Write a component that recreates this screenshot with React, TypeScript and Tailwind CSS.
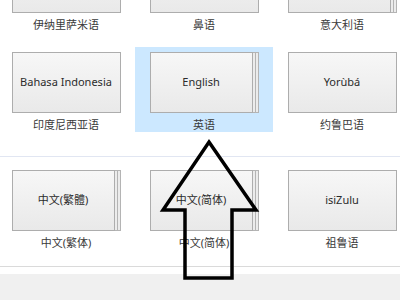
const FONT = { fontFamily: '"Noto Sans", "Noto Sans CJK SC", sans-serif' };

type Lang = { native: string; label: string; stacked?: boolean; selected?: boolean };

// top row is scrolled past; its tile captions are out of view
const rows: Lang[][] = [
  [
    { native: "", label: "伊纳里萨米语" },
    { native: "", label: "鼻语" },
    { native: "", label: "意大利语", stacked: true },
  ],
  [
    { native: "Bahasa Indonesia", label: "印度尼西亚语" },
    { native: "English", label: "英语", stacked: true, selected: true },
    { native: "Yorùbá", label: "约鲁巴语" },
  ],
];

const lastRow: Lang[] = [
  { native: "中文(繁體)", label: "中文(繁体)", stacked: true },
  { native: "中文(简体)", label: "中文(简体)", stacked: true },
  { native: "isiZulu", label: "祖鲁语" },
];

function Tile({ lang }: { lang: Lang }) {
  return (
    <div
      className={
        "flex h-[85px] w-[138px] shrink-0 flex-col items-center pt-[5px] " +
        (lang.selected ? "bg-[#cce8ff]" : "")
      }
    >
      <div className="flex h-[61px] w-[109px]">
        <div className="flex flex-1 items-center justify-center border border-[#adadad] bg-linear-to-b from-[#f7f7f7] to-[#e9e9e9] text-[11px] text-[#2b2b2b]">
          {lang.native}
        </div>
        {lang.stacked && (
          <>
            <div className="w-[3px] border-y border-r border-[#b4b4b4] bg-[#ececec]" />
            <div className="w-[3px] border-y border-r border-[#b4b4b4] bg-[#ececec]" />
          </>
        )}
      </div>
      <div className="mt-[5px] text-[11px] leading-[14px] text-[#3a3a3a]">{lang.label}</div>
    </div>
  );
}

export default function App() {
  return (
    <div className="relative h-[300px] w-[400px] overflow-hidden bg-white" style={FONT}>
      <div className="mt-[-53px] flex flex-col">
        <div className="ml-[-3px] flex">
          {rows[0].map((l) => (
            <Tile key={l.label} lang={l} />
          ))}
        </div>
        <div className="ml-[-3px] mt-[15px] flex">
          {rows[1].map((l) => (
            <Tile key={l.label} lang={l} />
          ))}
        </div>
        <div className="mt-[24px] h-px bg-[#e1e6f2]" />
        <div className="ml-[-3px] mt-[8px] flex">
          {lastRow.map((l) => (
            <Tile key={l.label} lang={l} />
          ))}
        </div>
        <div className="mt-[16px] h-px bg-[#dadada]" />
        <div className="h-[7px] bg-white" />
        <div className="h-[40px] bg-[#f0f0f0]" />
      </div>
      <svg className="absolute left-0 top-0" width="400" height="300" viewBox="0 0 400 300">
        <polygon
          points="209,142 256,210 232,210 232,278 185,278 185,210 163,210"
          fill="none"
          stroke="#000"
          strokeWidth="3.5"
          strokeLinejoin="miter"
        />
      </svg>
    </div>
  );
}
